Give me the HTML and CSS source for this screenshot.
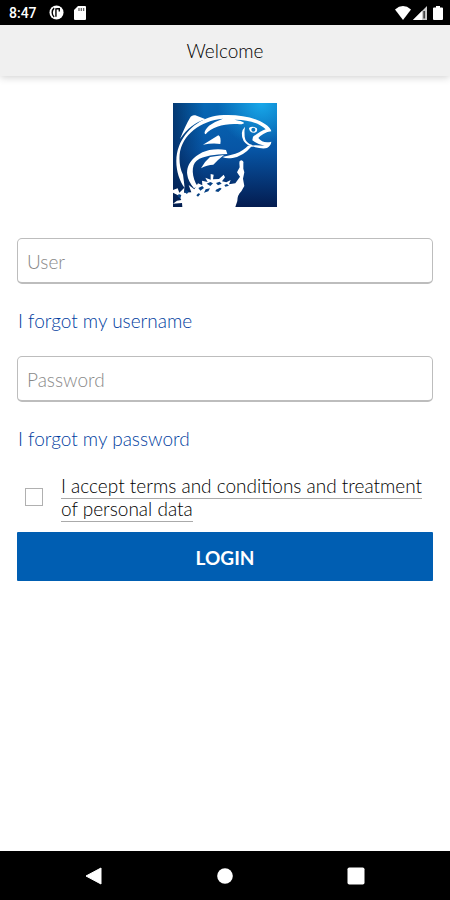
FILE: index.html
```html
<!DOCTYPE html>
<html lang="en">
<head>
<meta charset="utf-8">
<meta name="viewport" content="width=device-width, initial-scale=1">
<title>Welcome</title>
<link rel="stylesheet" href="styles.css">
</head>
<body>
<div class="status-bar">
  <span class="time">8:47</span>
  <svg class="status-icon notice" viewBox="0 0 16 16" aria-hidden="true"><circle cx="8" cy="8" r="7.5" fill="#fff"/><path d="M5.5 3.3Q3.4 5 3.4 8t2.1 4.7M7.4 3.4v9.2M8 4h3v2.8" fill="none" stroke="#000" stroke-width="1.5"/></svg>
  <svg class="status-icon card" viewBox="0 0 12 14" aria-hidden="true"><path d="M4 0h7q1 0 1 1v12q0 1-1 1H1q-1 0-1-1V4z" fill="#fff"/><path d="M5 2v3M7.3 2v3M9.6 2v3" stroke="#666" stroke-width="1.3"/></svg>
  <span class="spacer"></span>
  <svg class="status-icon wifi" viewBox="0 0 16 14" aria-hidden="true"><path d="M0 3.5Q8-3.4 16 3.5L8 14z" fill="#fff"/></svg>
  <svg class="status-icon signal" viewBox="0 0 14 14" aria-hidden="true"><path d="M14 0v14H0z" fill="#ccc"/><path d="M9 5v9H0z" fill="#fff"/><path d="M10.3 5v7.5h1.8V5z" fill="#444"/></svg>
  <svg class="status-icon battery" viewBox="0 0 10 14" aria-hidden="true"><path d="M3 0h4v1.5h2q1 0 1 1V13q0 1-1 1H1q-1 0-1-1V2.5q0-1 1-1h2z" fill="#fff"/></svg>
</div>
<header class="title-bar"><h1>Welcome</h1></header>
<main>
  <svg class="logo" viewBox="24 23 312 312" role="img" aria-label="Leaping fish">
    <defs>
      <linearGradient id="sea" x1="0" y1="0" x2="0" y2="1"><stop offset="0" stop-color="#0668b5"/><stop offset=".45" stop-color="#0755a5"/><stop offset="1" stop-color="#041c50"/></linearGradient>
      <radialGradient id="glow" cx=".85" cy="0" r=".42"><stop offset="0" stop-color="#18a8ea"/><stop offset="1" stop-color="#18a8ea" stop-opacity="0"/></radialGradient>
      <linearGradient id="edge"><stop offset="0" stop-color="#03204f" stop-opacity=".65"/><stop offset=".3" stop-color="#03204f" stop-opacity="0"/></linearGradient>
    </defs>
    <rect x="24" y="23" width="312" height="312" fill="url(#sea)"/>
    <rect x="24" y="23" width="312" height="312" fill="url(#edge)"/>
    <rect x="24" y="23" width="312" height="312" fill="url(#glow)"/>
    <g fill="#fff">
      <path d="M45 131C55 107 65 82 77 64Q82 58 91 60L122 72C91 80 67 100 45 131z"/>
      <path d="M59 278C35 246 26 194 42 153C61 106 105 66 164 60C215 55 273 66 301 87C310 93 317 99 319 108Q307 108 295 116Q283 123 280 128Q293 145 319 139Q318 151 306 158Q291 162 260 153Q235 183 203 188Q184 191 172 185Q191 181 211 175Q235 166 249 151Q270 149 299 151Q279 149 262 135L264 124Q286 108 302 102C283 82 245 72 208 73C243 79 243 86 225 87C184 82 139 95 122 117Q112 112 132 91Q150 78 174 70C106 76 51 118 44 177Q41 213 54 238Q57 259 59 278z"/>
      <path d="M114 148L160 120Q169 124 166 146Q144 142 114 148z"/>
      <path d="M67 239C62 202 95 173 133 164Q160 159 183 164L187 176C151 178 116 180 95 196C78 209 80 246 98 273L87 279Q69 257 67 239z"/>
      <path d="M108 219Q119 198 135 185L177 179Q159 193 145 208Q126 208 108 219z"/>
      <path d="M240 94Q223 111 236 137Q246 151 263 155L262 149Q241 142 239 124Q237 107 240 94z"/>
      <path d="M252 98Q261 91 275 98Q280 108 269 112Q253 113 252 98z"/>
      <path d="M24 284L38 279L43 292L58 277L57 292L79 291L71 269L88 282L99 264L112 270L111 256L128 260L121 247L137 253L137 236L146 238L144 252L162 251L176 238L180 246L171 258L184 261L197 254L192 267L211 264L225 244L216 231L224 216L223 203Q222 196 229 195Q237 197 235 205L235 220L238 231L234 250L238 272L229 288Q217 299 217 317L211 335H52L51 323L24 325L36 316L49 314L42 301L24 292z"/>
    </g>
    <circle cx="265" cy="103" r="6" fill="#0874bd"/>
    <path d="M41 296l8 3-3 10-8-5zM62 283l9 5-5 8-7-5zM100 278l12-6 5 6-11 8zM125 265l11-5 8 4-8 8zM153 263l11-4 6 6-11 5zM122 282l13-3-5 9-13 4zM153 283l12-6 5 3-10 10-9-2zM178 269l8-3 6 5-11 3zM94 300l6-6 6 2-7 8z" fill="#064184"/>
  </svg>
  <form>
    <input class="field" type="text" aria-label="User" placeholder="User">
    <a class="help-link" href="#">I forgot my username</a>
    <input class="field" type="password" aria-label="Password" placeholder="Password">
    <a class="help-link" href="#">I forgot my password</a>
    <div class="consent">
      <input type="checkbox" id="terms">
      <label for="terms"><span>I accept terms and conditions and treatment of personal data</span></label>
    </div>
    <button class="login" type="button">LOGIN</button>
  </form>
</main>
<nav class="nav-bar" aria-label="System navigation">
  <button type="button" aria-label="Back"><svg viewBox="0 0 18 18"><path d="M16 1v16L1 9z" fill="#fff" stroke="#fff" stroke-linejoin="round"/></svg></button>
  <button type="button" aria-label="Home"><svg viewBox="0 0 18 18"><circle cx="9" cy="9" r="7.8" fill="#fff"/></svg></button>
  <button type="button" aria-label="Recent apps"><svg viewBox="0 0 18 18"><rect x=".5" y=".5" width="17" height="17" rx="1.8" fill="#fff"/></svg></button>
</nav>
</body>
</html>
```
FILE: styles.css
```css
* { box-sizing: border-box; }

body {
  margin: 0;
  min-height: 100vh;
  display: flex;
  flex-direction: column;
  background: #fff;
  color: #000;
  font-family: Lato, sans-serif;
  font-size: 19px;
  font-weight: 300;
}

.status-bar {
  display: flex;
  align-items: center;
  height: 25px;
  padding: 0 7px 0 9px;
  background: #000;
  color: #fff;
}

.time {
  font: 500 14px/24px Roboto, sans-serif;
  margin-right: 12px;
}

.status-icon { display: block; height: 14px; }
.notice { width: 15px; height: 15px; margin-right: 10px; }
.card { width: 12px; }
.spacer { flex: 1; }
.wifi { width: 16px; margin-right: 2px; }
.signal { width: 14px; margin-right: 6px; }
.battery { width: 10px; }

.title-bar {
  display: flex;
  align-items: center;
  justify-content: center;
  height: 51px;
  background: #f0f0f0;
  box-shadow: 0 1px 8px rgba(0, 0, 0, .2);
}

h1 {
  margin: 0;
  font-size: 19px;
  font-weight: inherit;
}

main {
  flex: 1;
  padding: 27px 17px 24px;
}

.logo {
  display: block;
  width: 104px;
  height: 104px;
  margin: 0 auto 31px;
}

form {
  display: flex;
  flex-direction: column;
}

.field {
  width: 100%;
  height: 46px;
  padding: 2px 9px 0;
  border: 1px solid #bdbdbd;
  border-bottom-width: 2px;
  border-radius: 5px;
  background: #fff;
  color: #000;
  font: inherit;
}

.field::placeholder { color: #888; opacity: 1; }

.help-link {
  align-self: flex-start;
  margin: 25px 0 23px 1px;
  line-height: 24px;
  color: #003da0;
  text-decoration: none;
}

.consent {
  display: flex;
  align-items: center;
  gap: 18px;
  padding-left: 8px;
  margin-bottom: 12px;
}

.consent input {
  appearance: none;
  flex: none;
  width: 18px;
  height: 18px;
  margin: 0;
  border: 1px solid #b0b0b0;
  background: #fff;
}

.consent input:checked { background: #005eb2; }

.consent label { line-height: 23px; }
.consent span { padding-bottom: 1px; border-bottom: 1px solid #aaa; }

.login {
  height: 49px;
  padding: 2px 0 0;
  border: 0;
  border-radius: 1px;
  background: #005eb2;
  color: #fff;
  font: 700 19px Lato, sans-serif;
}

.nav-bar {
  display: flex;
  align-items: center;
  justify-content: space-between;
  height: 49px;
  padding: 0 85px;
  background: #000;
}

.nav-bar button {
  padding: 0;
  border: 0;
  background: none;
}

.nav-bar svg { display: block; width: 18px; height: 18px; }
```
